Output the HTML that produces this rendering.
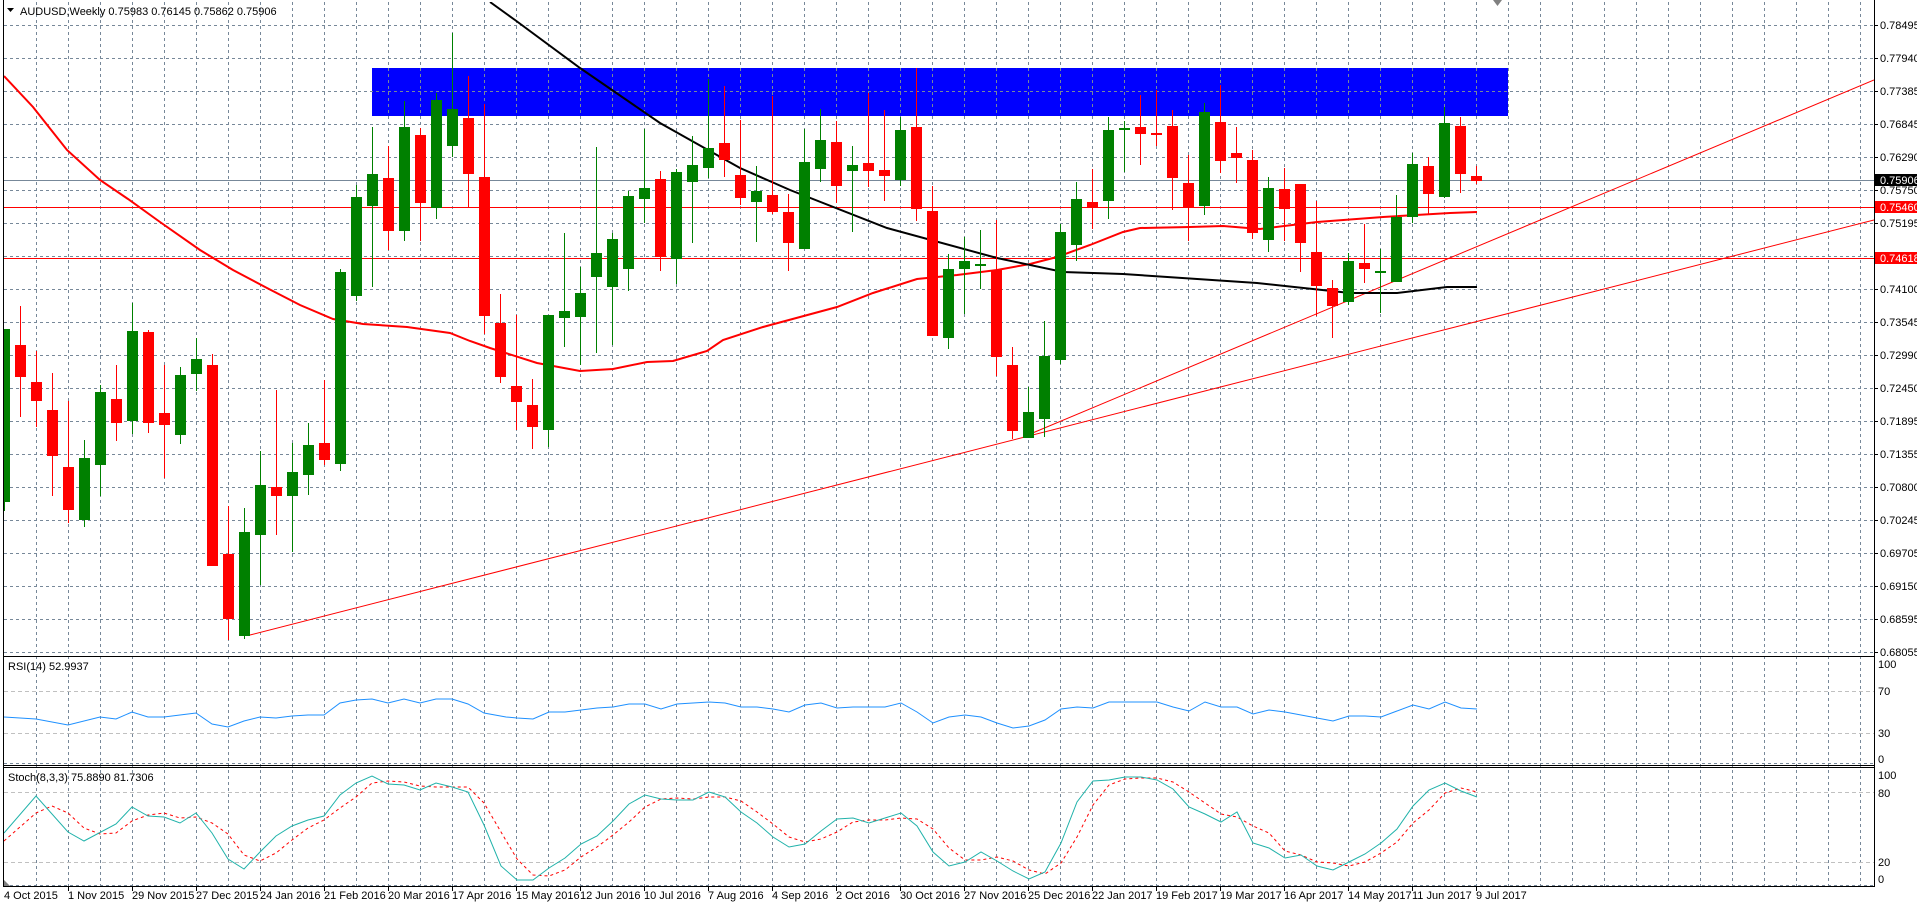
<!DOCTYPE html>
<html><head><meta charset="utf-8"><style>
html,body{margin:0;padding:0;background:#fff;width:1917px;height:906px;overflow:hidden}
svg{display:block}
text{font-family:"Liberation Sans",sans-serif;font-size:11px;fill:#000}
</style></head><body>
<svg width="1917" height="906" viewBox="0 0 1917 906" xmlns="http://www.w3.org/2000/svg">
<defs>
<clipPath id="m"><rect x="4" y="2" width="1870" height="650"/></clipPath>
<clipPath id="r"><rect x="4" y="658" width="1870" height="106"/></clipPath>
<clipPath id="s"><rect x="4" y="768" width="1870" height="118"/></clipPath>
</defs>
<rect width="1917" height="906" fill="#fff"/>
<!-- blue zone -->
<rect x="372" y="68" width="1136" height="48" fill="#0000ff"/>
<!-- grids -->
<g stroke="#778899" stroke-width="1" stroke-dasharray="3,3" shape-rendering="crispEdges">
<path d="M36.5 2V887M68.5 2V887M100.5 2V887M132.5 2V887M164.5 2V887M196.5 2V887M228.5 2V887M260.5 2V887M292.5 2V887M324.5 2V887M356.5 2V887M388.5 2V887M420.5 2V887M452.5 2V887M484.5 2V887M516.5 2V887M548.5 2V887M580.5 2V887M612.5 2V887M644.5 2V887M676.5 2V887M708.5 2V887M740.5 2V887M772.5 2V887M804.5 2V887M836.5 2V887M868.5 2V887M900.5 2V887M932.5 2V887M964.5 2V887M996.5 2V887M1028.5 2V887M1060.5 2V887M1092.5 2V887M1124.5 2V887M1156.5 2V887M1188.5 2V887M1220.5 2V887M1252.5 2V887M1284.5 2V887M1316.5 2V887M1348.5 2V887M1380.5 2V887M1412.5 2V887M1444.5 2V887M1476.5 2V887M1508.5 2V887M1540.5 2V887M1572.5 2V887M1604.5 2V887M1636.5 2V887M1668.5 2V887M1700.5 2V887M1732.5 2V887M1764.5 2V887M1796.5 2V887M1828.5 2V887M1860.5 2V887"/>
<path d="M4 25.5H1874M4 58.5H1874M4 91.5H1874M4 124.5H1874M4 157.5H1874M4 190.5H1874M4 223.5H1874M4 256.5H1874M4 289.5H1874M4 322.5H1874M4 355.5H1874M4 388.5H1874M4 421.5H1874M4 454.5H1874M4 487.5H1874M4 520.5H1874M4 553.5H1874M4 586.5H1874M4 619.5H1874M4 652.5H1874M4 763.5H1874M4 885.5H1874"/>
</g>
<g stroke="#c0c0c0" stroke-dasharray="4,3" shape-rendering="crispEdges">
<path d="M4 691.5H1874M4 733.5H1874M4 792.5H1874M4 862.5H1874"/>
</g>
<!-- horizontal lines -->
<g shape-rendering="crispEdges">
<path d="M4 180.5H1874" stroke="#778899"/>
<path d="M4 207.5H1874M4 258.5H1874" stroke="#ff0000"/>
</g>
<g clip-path="url(#m)">
<path d="M250 635L1874 220M1023 437L1874 80" stroke="#ff0000" stroke-width="1" fill="none"/>
<polyline fill="none" stroke="#ff0000" stroke-width="2" points="4,76 33,107 67,150 100,180 128,199 160,222 200,250 233,270 267,288 300,305 333,319 363,324 407,327 450,333 470,341 490,348 537,363 580,371 613,369 647,362 673,361 707,351 723,340 763,327 800,317 837,307 873,293 917,279 957,275 997,270 1030,264 1057,257 1090,245 1123,232 1140,228 1190,227 1223,226 1260,229 1317,222 1383,217 1450,213 1477,212"/>
<polyline fill="none" stroke="#000" stroke-width="2" points="490,2 515,20 580,68 660,123 740,168 790,190 887,228 997,258 1063,272 1123,274 1257,283 1350,293 1397,293 1447,287 1477,287"/>
<g shape-rendering="crispEdges">
<g fill="#008000">
<rect x="4" y="329" width="1" height="182"/><rect x="-1" y="329" width="11" height="173"/>
<rect x="84" y="440" width="1" height="87"/><rect x="79" y="458" width="11" height="62"/>
<rect x="100" y="385" width="1" height="111"/><rect x="95" y="392" width="11" height="73"/>
<rect x="132" y="303" width="1" height="131"/><rect x="127" y="331" width="11" height="90"/>
<rect x="180" y="367" width="1" height="77"/><rect x="175" y="375" width="11" height="60"/>
<rect x="196" y="338" width="1" height="53"/><rect x="191" y="359" width="11" height="15"/>
<rect x="244" y="508" width="1" height="131"/><rect x="239" y="532" width="11" height="104"/>
<rect x="260" y="451" width="1" height="134"/><rect x="255" y="485" width="11" height="50"/>
<rect x="292" y="443" width="1" height="109"/><rect x="287" y="472" width="11" height="24"/>
<rect x="308" y="423" width="1" height="72"/><rect x="303" y="445" width="11" height="30"/>
<rect x="340" y="269" width="1" height="202"/><rect x="335" y="272" width="11" height="192"/>
<rect x="356" y="185" width="1" height="116"/><rect x="351" y="197" width="11" height="99"/>
<rect x="372" y="127" width="1" height="160"/><rect x="367" y="174" width="11" height="32"/>
<rect x="404" y="101" width="1" height="140"/><rect x="399" y="127" width="11" height="104"/>
<rect x="436" y="93" width="1" height="126"/><rect x="431" y="100" width="11" height="108"/>
<rect x="452" y="33" width="1" height="124"/><rect x="447" y="109" width="11" height="37"/>
<rect x="548" y="315" width="1" height="132"/><rect x="543" y="315" width="11" height="115"/>
<rect x="564" y="233" width="1" height="114"/><rect x="559" y="311" width="11" height="7"/>
<rect x="580" y="267" width="1" height="98"/><rect x="575" y="293" width="11" height="24"/>
<rect x="596" y="147" width="1" height="206"/><rect x="591" y="253" width="11" height="24"/>
<rect x="612" y="233" width="1" height="112"/><rect x="607" y="239" width="11" height="48"/>
<rect x="628" y="191" width="1" height="100"/><rect x="623" y="196" width="11" height="73"/>
<rect x="644" y="129" width="1" height="94"/><rect x="639" y="188" width="11" height="11"/>
<rect x="676" y="169" width="1" height="115"/><rect x="671" y="172" width="11" height="87"/>
<rect x="692" y="136" width="1" height="107"/><rect x="687" y="165" width="11" height="17"/>
<rect x="708" y="79" width="1" height="99"/><rect x="703" y="148" width="11" height="20"/>
<rect x="756" y="166" width="1" height="76"/><rect x="751" y="191" width="11" height="11"/>
<rect x="804" y="129" width="1" height="120"/><rect x="799" y="162" width="11" height="87"/>
<rect x="820" y="109" width="1" height="73"/><rect x="815" y="140" width="11" height="29"/>
<rect x="852" y="146" width="1" height="86"/><rect x="847" y="165" width="11" height="6"/>
<rect x="900" y="117" width="1" height="69"/><rect x="895" y="130" width="11" height="50"/>
<rect x="948" y="254" width="1" height="95"/><rect x="943" y="269" width="11" height="69"/>
<rect x="964" y="237" width="1" height="77"/><rect x="959" y="261" width="11" height="8"/>
<rect x="980" y="230" width="1" height="59"/><rect x="975" y="264" width="11" height="2"/>
<rect x="1028" y="387" width="1" height="51"/><rect x="1023" y="412" width="11" height="26"/>
<rect x="1044" y="321" width="1" height="116"/><rect x="1039" y="356" width="11" height="63"/>
<rect x="1060" y="224" width="1" height="140"/><rect x="1055" y="232" width="11" height="128"/>
<rect x="1076" y="182" width="1" height="79"/><rect x="1071" y="199" width="11" height="46"/>
<rect x="1108" y="117" width="1" height="102"/><rect x="1103" y="130" width="11" height="71"/>
<rect x="1124" y="121" width="1" height="51"/><rect x="1119" y="128" width="11" height="2"/>
<rect x="1204" y="103" width="1" height="112"/><rect x="1199" y="112" width="11" height="94"/>
<rect x="1268" y="177" width="1" height="75"/><rect x="1263" y="188" width="11" height="52"/>
<rect x="1348" y="253" width="1" height="52"/><rect x="1343" y="261" width="11" height="41"/>
<rect x="1380" y="249" width="1" height="64"/><rect x="1375" y="271" width="11" height="2"/>
<rect x="1396" y="195" width="1" height="87"/><rect x="1391" y="217" width="11" height="65"/>
<rect x="1412" y="153" width="1" height="70"/><rect x="1407" y="164" width="11" height="53"/>
<rect x="1444" y="107" width="1" height="91"/><rect x="1439" y="123" width="11" height="74"/>
</g>
<g fill="#ff0000">
<rect x="20" y="306" width="1" height="111"/><rect x="15" y="345" width="11" height="32"/>
<rect x="36" y="351" width="1" height="76"/><rect x="31" y="382" width="11" height="19"/>
<rect x="52" y="373" width="1" height="123"/><rect x="47" y="410" width="11" height="46"/>
<rect x="68" y="401" width="1" height="122"/><rect x="63" y="467" width="11" height="43"/>
<rect x="116" y="365" width="1" height="76"/><rect x="111" y="399" width="11" height="24"/>
<rect x="148" y="330" width="1" height="103"/><rect x="143" y="332" width="11" height="91"/>
<rect x="164" y="365" width="1" height="113"/><rect x="159" y="413" width="11" height="12"/>
<rect x="212" y="354" width="1" height="212"/><rect x="207" y="365" width="11" height="201"/>
<rect x="228" y="506" width="1" height="134"/><rect x="223" y="554" width="11" height="65"/>
<rect x="276" y="390" width="1" height="145"/><rect x="271" y="487" width="11" height="9"/>
<rect x="324" y="380" width="1" height="85"/><rect x="319" y="443" width="11" height="17"/>
<rect x="388" y="146" width="1" height="104"/><rect x="383" y="178" width="11" height="53"/>
<rect x="420" y="128" width="1" height="113"/><rect x="415" y="135" width="11" height="68"/>
<rect x="468" y="76" width="1" height="131"/><rect x="463" y="118" width="11" height="56"/>
<rect x="484" y="104" width="1" height="230"/><rect x="479" y="177" width="11" height="139"/>
<rect x="500" y="294" width="1" height="89"/><rect x="495" y="323" width="11" height="54"/>
<rect x="516" y="315" width="1" height="115"/><rect x="511" y="386" width="11" height="16"/>
<rect x="532" y="379" width="1" height="70"/><rect x="527" y="405" width="11" height="22"/>
<rect x="660" y="171" width="1" height="100"/><rect x="655" y="179" width="11" height="78"/>
<rect x="724" y="86" width="1" height="91"/><rect x="719" y="143" width="11" height="17"/>
<rect x="740" y="120" width="1" height="85"/><rect x="735" y="175" width="11" height="23"/>
<rect x="772" y="96" width="1" height="118"/><rect x="767" y="195" width="11" height="17"/>
<rect x="788" y="194" width="1" height="77"/><rect x="783" y="212" width="11" height="31"/>
<rect x="836" y="121" width="1" height="82"/><rect x="831" y="142" width="11" height="44"/>
<rect x="868" y="93" width="1" height="94"/><rect x="863" y="163" width="11" height="8"/>
<rect x="884" y="110" width="1" height="91"/><rect x="879" y="170" width="11" height="6"/>
<rect x="916" y="68" width="1" height="153"/><rect x="911" y="127" width="11" height="82"/>
<rect x="932" y="186" width="1" height="150"/><rect x="927" y="211" width="11" height="125"/>
<rect x="996" y="220" width="1" height="156"/><rect x="991" y="270" width="11" height="87"/>
<rect x="1012" y="347" width="1" height="92"/><rect x="1007" y="365" width="11" height="66"/>
<rect x="1092" y="169" width="1" height="60"/><rect x="1087" y="202" width="11" height="6"/>
<rect x="1140" y="95" width="1" height="70"/><rect x="1135" y="127" width="11" height="7"/>
<rect x="1156" y="90" width="1" height="56"/><rect x="1151" y="133" width="11" height="2"/>
<rect x="1172" y="110" width="1" height="100"/><rect x="1167" y="126" width="11" height="52"/>
<rect x="1188" y="155" width="1" height="86"/><rect x="1183" y="183" width="11" height="24"/>
<rect x="1220" y="85" width="1" height="88"/><rect x="1215" y="122" width="11" height="39"/>
<rect x="1236" y="127" width="1" height="56"/><rect x="1231" y="153" width="11" height="5"/>
<rect x="1252" y="150" width="1" height="89"/><rect x="1247" y="160" width="11" height="73"/>
<rect x="1284" y="168" width="1" height="73"/><rect x="1279" y="189" width="11" height="20"/>
<rect x="1300" y="184" width="1" height="88"/><rect x="1295" y="184" width="11" height="59"/>
<rect x="1316" y="201" width="1" height="115"/><rect x="1311" y="252" width="11" height="34"/>
<rect x="1332" y="280" width="1" height="58"/><rect x="1327" y="288" width="11" height="18"/>
<rect x="1364" y="224" width="1" height="59"/><rect x="1359" y="263" width="11" height="6"/>
<rect x="1428" y="157" width="1" height="58"/><rect x="1423" y="166" width="11" height="28"/>
<rect x="1460" y="117" width="1" height="76"/><rect x="1455" y="126" width="11" height="48"/>
<rect x="1476" y="166" width="1" height="18"/><rect x="1471" y="176" width="11" height="5"/>
</g>
</g>
</g>
<g clip-path="url(#r)">
<polyline fill="none" stroke="#1e90ff" stroke-width="1" points="4,717 36,719 68,725 100,717 116,719 132,712 148,717 164,717 180,715 196,713 212,724 228,727 244,721 260,717 276,718 292,716 308,715 324,715 340,703 356,700 372,699 388,703 404,699 420,703 436,699 452,699 468,704 484,713 506,717 517,718 533,719 549,712 565,712 581,710 597,708 613,707 629,704 645,704 661,709 677,704 693,703 709,702 725,703 741,707 757,707 773,709 789,712 805,705 821,703 837,708 853,707 869,707 885,707 901,703 917,712 933,723 949,717 965,715 981,717 997,723 1013,728 1029,726 1045,720 1061,709 1077,707 1093,708 1109,702 1125,702 1141,702 1157,702 1173,707 1189,711 1205,702 1221,707 1237,707 1253,714 1269,710 1285,712 1301,715 1317,718 1333,721 1349,716 1365,716 1381,717 1397,711 1413,705 1429,709 1445,702 1461,708 1477,709"/>
</g>
<g clip-path="url(#s)">
<polyline fill="none" stroke="#ff0000" stroke-width="1" stroke-dasharray="3,3" points="4,841 36,813 52,806 68,813 84,828 100,834 116,833 132,821 148,815 164,813 180,818 196,817 212,823 228,834 244,855 260,861 276,853 292,840 308,828 324,820 340,808 356,797 372,783 388,781 404,782 420,786 436,787 452,787 468,787 484,803 501,832 517,859 533,875 549,876 565,870 581,857 597,847 613,835 629,822 645,807 661,799 677,798 693,799 709,797 725,797 741,801 757,812 773,824 789,837 805,842 821,839 837,832 853,822 869,820 885,820 901,818 917,819 933,829 949,848 965,860 981,860 997,857 1013,861 1029,870 1045,874 1061,863 1077,837 1093,805 1109,785 1125,779 1141,778 1157,778 1173,782 1189,792 1205,803 1221,814 1237,817 1253,826 1269,833 1285,851 1301,855 1317,862 1333,863 1349,866 1365,862 1381,853 1397,842 1413,823 1429,810 1445,793 1461,788 1477,792"/>
<polyline fill="none" stroke="#20b2aa" stroke-width="1" points="4,833 36,796 68,832 84,841 116,824 132,807 148,816 164,817 180,823 196,813 212,833 228,859 244,869 260,852 276,836 292,826 308,820 324,816 340,795 356,783 372,776 388,784 404,785 420,790 436,783 452,787 468,792 484,825 501,866 517,880 533,880 549,868 565,858 581,844 597,836 613,821 629,804 645,795 661,799 677,800 693,800 709,792 725,797 741,812 757,823 773,837 789,847 805,844 821,831 837,819 853,818 869,823 885,818 901,813 917,826 933,852 949,866 965,862 981,852 997,861 1013,871 1029,879 1045,872 1061,843 1077,802 1093,781 1109,780 1125,777 1141,777 1157,780 1173,789 1189,807 1205,814 1221,822 1237,812 1253,843 1269,848 1285,858 1301,855 1317,866 1333,870 1349,862 1365,854 1381,843 1397,829 1413,806 1429,790 1445,783 1461,791 1477,797"/>
</g>
<g stroke="#000" stroke-width="1" shape-rendering="crispEdges" fill="none">
<path d="M3.5 0V887M1874.5 0V887"/>
<path d="M3 656.5H1875M3 765.5H1875M3 767.5H1875M3 886.5H1875"/>
</g>
<g stroke="#000" shape-rendering="crispEdges">
<path d="M1874 25.5h4M1874 58.5h4M1874 91.5h4M1874 124.5h4M1874 157.5h4M1874 190.5h4M1874 223.5h4M1874 289.5h4M1874 322.5h4M1874 355.5h4M1874 388.5h4M1874 421.5h4M1874 454.5h4M1874 487.5h4M1874 520.5h4M1874 553.5h4M1874 586.5h4M1874 619.5h4M1874 652.5h4"/>
<path d="M68.5 887v4M132.5 887v4M196.5 887v4M260.5 887v4M324.5 887v4M388.5 887v4M452.5 887v4M516.5 887v4M580.5 887v4M644.5 887v4M708.5 887v4M772.5 887v4M836.5 887v4M900.5 887v4M964.5 887v4M1028.5 887v4M1092.5 887v4M1156.5 887v4M1220.5 887v4M1284.5 887v4M1348.5 887v4M1412.5 887v4M1476.5 887v4"/>
</g>
<g>
<text x="1880" y="29">0.78495</text>
<text x="1880" y="62">0.77940</text>
<text x="1880" y="95">0.77385</text>
<text x="1880" y="128">0.76845</text>
<text x="1880" y="161">0.76290</text>
<text x="1880" y="194">0.75750</text>
<text x="1880" y="227">0.75195</text>
<text x="1880" y="293">0.74100</text>
<text x="1880" y="326">0.73545</text>
<text x="1880" y="359">0.72990</text>
<text x="1880" y="392">0.72450</text>
<text x="1880" y="425">0.71895</text>
<text x="1880" y="458">0.71355</text>
<text x="1880" y="491">0.70800</text>
<text x="1880" y="524">0.70245</text>
<text x="1880" y="557">0.69705</text>
<text x="1880" y="590">0.69150</text>
<text x="1880" y="623">0.68595</text>
<text x="1880" y="656">0.68055</text>
</g>
<rect x="1875" y="174" width="42" height="12" fill="#000"/>
<text x="1880" y="184" style="fill:#fff">0.75906</text>
<rect x="1875" y="201" width="42" height="12" fill="#ff0000"/>
<text x="1880" y="211" style="fill:#fff">0.75460</text>
<rect x="1875" y="252" width="42" height="12" fill="#ff0000"/>
<text x="1880" y="262" style="fill:#fff">0.74618</text>
<text x="1878" y="668">100</text>
<text x="1878" y="695">70</text>
<text x="1878" y="737">30</text>
<text x="1878" y="763">0</text>
<text x="1878" y="779">100</text>
<text x="1878" y="797">80</text>
<text x="1878" y="866">20</text>
<text x="1878" y="883">0</text>
<path d="M7 8h7l-3.5 4z" fill="#000"/>
<text x="20" y="15">AUDUSD,Weekly  0.75983 0.76145 0.75862 0.75906</text>
<text x="8" y="670">RSI(14) 52.9937</text>
<text x="8" y="781">Stoch(8,3,3) 75.8890 81.7306</text>
<path d="M1493 0h9l-4.5 6z" fill="#808080"/>
<path d="M4 880v6h6z" fill="#808080"/>
<g>
<text x="4" y="899">4 Oct 2015</text>
<text x="68" y="899">1 Nov 2015</text>
<text x="132" y="899">29 Nov 2015</text>
<text x="196" y="899">27 Dec 2015</text>
<text x="260" y="899">24 Jan 2016</text>
<text x="324" y="899">21 Feb 2016</text>
<text x="388" y="899">20 Mar 2016</text>
<text x="452" y="899">17 Apr 2016</text>
<text x="516" y="899">15 May 2016</text>
<text x="580" y="899">12 Jun 2016</text>
<text x="644" y="899">10 Jul 2016</text>
<text x="708" y="899">7 Aug 2016</text>
<text x="772" y="899">4 Sep 2016</text>
<text x="836" y="899">2 Oct 2016</text>
<text x="900" y="899">30 Oct 2016</text>
<text x="964" y="899">27 Nov 2016</text>
<text x="1028" y="899">25 Dec 2016</text>
<text x="1092" y="899">22 Jan 2017</text>
<text x="1156" y="899">19 Feb 2017</text>
<text x="1220" y="899">19 Mar 2017</text>
<text x="1284" y="899">16 Apr 2017</text>
<text x="1348" y="899">14 May 2017</text>
<text x="1412" y="899">11 Jun 2017</text>
<text x="1476" y="899">9 Jul 2017</text>
</g>
</svg>
</body></html>
